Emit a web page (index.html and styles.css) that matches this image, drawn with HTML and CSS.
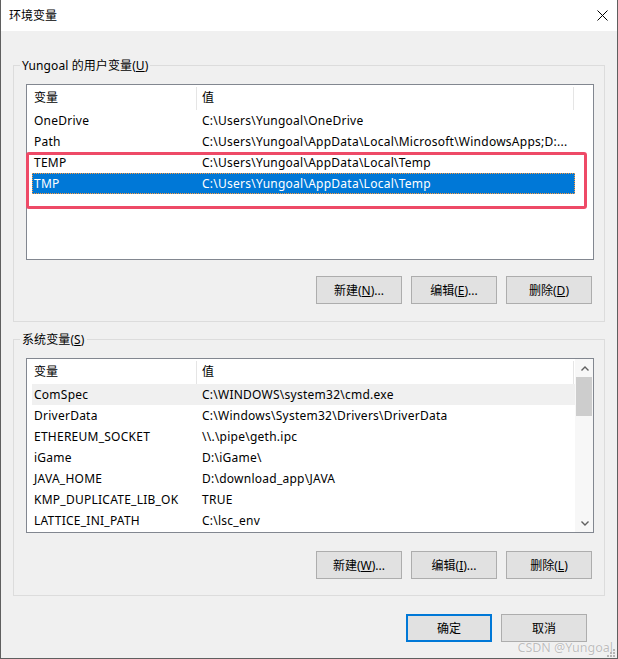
FILE: index.html
```html
<!DOCTYPE html>
<html lang="zh-CN">
<head>
<meta charset="utf-8">
<title>环境变量</title>
<link rel="stylesheet" href="styles.css">
</head>
<body>
<div class="window">
  <div class="titlebar">
    <span class="title">环境变量</span>
    <svg class="close" width="11" height="11" viewBox="0 0 11 11"><path d="M0.5 0.5 L10.5 10.5 M10.5 0.5 L0.5 10.5" stroke="#000" stroke-width="1" fill="none"/></svg>
  </div>
  <div class="content">
    <div class="group group-user">
      <div class="legend">Yungoal 的用户变量(<u>U</u>)</div>
      <div class="list list-user">
        <div class="list-main">
          <div class="list-head"><div class="hc hc1">变量</div><div class="hc hc2">值</div></div>
          <div class="row"><span class="c1">OneDrive</span><span class="c2">C:\Users\Yungoal\OneDrive</span></div>
          <div class="row"><span class="c1">Path</span><span class="c2">C:\Users\Yungoal\AppData\Local\Microsoft\WindowsApps;D:...</span></div>
          <div class="row"><span class="c1">TEMP</span><span class="c2">C:\Users\Yungoal\AppData\Local\Temp</span></div>
          <div class="row row-sel"><span class="c1">TMP</span><span class="c2">C:\Users\Yungoal\AppData\Local\Temp</span></div>
        </div>
        <div class="list-side"></div>
      </div>
      <div class="btns">
        <div class="btn">新建(<u>N</u>)...</div>
        <div class="btn">编辑(<u>E</u>)...</div>
        <div class="btn">删除(<u>D</u>)</div>
      </div>
    </div>

    <div class="group group-sys">
      <div class="legend">系统变量(<u>S</u>)</div>
      <div class="list list-sys">
        <div class="list-main">
          <div class="list-head"><div class="hc hc1">变量</div><div class="hc hc2">值</div></div>
          <div class="row row-gray"><span class="c1">ComSpec</span><span class="c2">C:\WINDOWS\system32\cmd.exe</span></div>
          <div class="row"><span class="c1">DriverData</span><span class="c2">C:\Windows\System32\Drivers\DriverData</span></div>
          <div class="row"><span class="c1">ETHEREUM_SOCKET</span><span class="c2">\\.\pipe\geth.ipc</span></div>
          <div class="row"><span class="c1">iGame</span><span class="c2">D:\iGame\</span></div>
          <div class="row"><span class="c1">JAVA_HOME</span><span class="c2">D:\download_app\JAVA</span></div>
          <div class="row"><span class="c1">KMP_DUPLICATE_LIB_OK</span><span class="c2">TRUE</span></div>
          <div class="row"><span class="c1">LATTICE_INI_PATH</span><span class="c2">C:\lsc_env</span></div>
        </div>
        <div class="scrollbar">
          <div class="sb-arrow">
            <svg width="8" height="5" viewBox="0 0 8 5"><path d="M0.5 4.5 L4 1 L7.5 4.5" stroke="#606060" stroke-width="1.4" fill="none"/></svg>
          </div>
          <div class="sb-thumb"></div>
          <div class="sb-track"></div>
          <div class="sb-arrow">
            <svg width="8" height="5" viewBox="0 0 8 5"><path d="M0.5 0.5 L4 4 L7.5 0.5" stroke="#606060" stroke-width="1.4" fill="none"/></svg>
          </div>
        </div>
      </div>
      <div class="btns">
        <div class="btn">新建(<u>W</u>)...</div>
        <div class="btn">编辑(<u>I</u>)...</div>
        <div class="btn">删除(<u>L</u>)</div>
      </div>
    </div>

    <div class="dialog-btns">
      <div class="btn btn-default">确定</div>
      <div class="btn">取消</div>
    </div>
  </div>

  <div class="annot"></div>
  <div class="watermark">CSDN @Yungoal</div>
  <svg class="grip" width="8" height="8" viewBox="0 0 8 8">
    <rect x="6" y="0" width="2" height="2" fill="#b5b5b5"/>
    <rect x="3" y="3" width="2" height="2" fill="#b5b5b5"/>
    <rect x="6" y="3" width="2" height="2" fill="#b5b5b5"/>
    <rect x="0" y="6" width="2" height="2" fill="#b5b5b5"/>
    <rect x="3" y="6" width="2" height="2" fill="#b5b5b5"/>
    <rect x="6" y="6" width="2" height="2" fill="#b5b5b5"/>
  </svg>
</div>
</body>
</html>
```

FILE: styles.css
```css
* { box-sizing: border-box; }

html, body {
  margin: 0;
  padding: 0;
  background: #f0f0f0;
}

body {
  font-family: "Noto Sans", "Noto Sans CJK SC", sans-serif;
  font-size: 12px;
  color: #000;
}

u { text-decoration: underline; text-underline-offset: 1px; }

.window {
  position: relative;
  width: 618px;
  height: 659px;
  background: #f0f0f0;
  border-left: 1px solid #5f5f5f;
  border-right: 1px solid #5f5f5f;
  border-bottom: 1px solid #5f5f5f;
  display: flex;
  flex-direction: column;
}

.titlebar {
  height: 31px;
  background: #fff;
  display: flex;
  align-items: center;
  justify-content: space-between;
  padding: 0 9px 0 8px;
  flex: none;
}

.title {
  line-height: 17px;
}

.close { display: block; }

.content {
  padding: 0 12px;
  display: flex;
  flex-direction: column;
}

.group {
  border: 1px solid #dcdcdc;
  padding: 0 10px 17px 12px;
}

.group-user { margin-top: 34px; }
.group-sys { margin-top: 17px; padding-bottom: 16px; }

.legend {
  width: max-content;
  margin: -9px 0 0 -6px;
  padding: 0 2px;
  line-height: 17px;
  height: 17px;
  background: #f0f0f0;
  letter-spacing: 0.1px;
}

.list {
  margin-top: 10px;
  border: 1px solid #828790;
  background: #fff;
  display: flex;
  overflow: hidden;
}

.list-user { height: 176px; }
.list-sys { height: 175px; }

.list-main {
  width: 548px;
  padding-left: 5px;
  flex: none;
}

.list-side { flex: 1; }

.list-head {
  display: flex;
  height: 25px;
  padding-top: 2px;
}

.hc {
  line-height: 21px;
  border-right: 1px solid #e5e5e5;
}

.hc1 { width: 165px; padding-left: 2px; }
.hc2 { width: 377px; padding-left: 5px; }

.row {
  display: flex;
  height: 21px;
  line-height: 21px;
  white-space: nowrap;
  letter-spacing: 0.25px;
}

.c1 { width: 170px; padding-left: 2px; flex: none; }
.c2 { flex: 1; }

.row-sel {
  background: #0078d7;
  color: #fff;
  outline: 1px dotted #ff9a3c;
  outline-offset: -1px;
}

.row-gray { background: #f0f0f0; }

.scrollbar {
  flex: 1;
  display: flex;
  flex-direction: column;
  background: #f7f7f7;
  padding-left: 1px;
}

.sb-arrow {
  height: 18px;
  display: flex;
  align-items: center;
  justify-content: center;
  flex: none;
}

.sb-arrow svg { display: block; }

.sb-thumb {
  height: 39px;
  margin-right: 1px;
  background: #cdcdcd;
  flex: none;
}

.sb-track { flex: 1; }

.btns {
  display: flex;
  justify-content: flex-end;
  gap: 9px;
  margin-top: 16px;
  margin-right: 2px;
}

.group-sys .btns { margin-top: 18px; }

.btn {
  width: 86px;
  height: 28px;
  background: #e1e1e1;
  border: 1px solid #adadad;
  display: flex;
  align-items: center;
  justify-content: center;
  line-height: 17px;
}

.btn-default {
  border: 2px solid #0078d7;
}

.dialog-btns {
  display: flex;
  justify-content: flex-end;
  gap: 9px;
  margin-top: 18px;
  margin-right: 18px;
}

.annot {
  position: absolute;
  left: 25px;
  top: 152px;
  width: 561px;
  height: 57px;
  border: 3px solid #ee4a67;
  border-radius: 3px;
}

.watermark {
  position: absolute;
  right: 4px;
  bottom: 3px;
  font-size: 12.5px;
  line-height: 15px;
  color: #bdbdbd;
  text-shadow: 0 0 1px #fff, 0 0 1px #fff;
}

.grip {
  position: absolute;
  right: 2px;
  bottom: 1px;
}
```
